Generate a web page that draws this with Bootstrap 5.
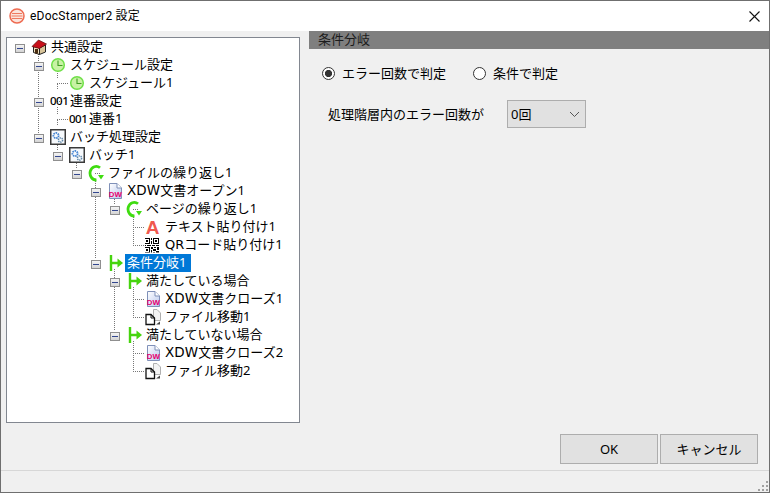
<!DOCTYPE html>
<html lang="ja"><head><meta charset="utf-8"><title>eDocStamper2 設定</title>
<link href="https://cdn.jsdelivr.net/npm/bootstrap@5.3.0/dist/css/bootstrap.min.css" rel="stylesheet">
<style>
html,body{margin:0;height:493px;overflow:hidden;background:#f0f0f0}
body{font-family:"Noto Sans","Noto Sans CJK JP",sans-serif;font-size:13px;line-height:18px;color:#000}
.win{height:493px;border:1px solid #6f6f6f;background:#f0f0f0}
.ttl{height:30px;background:#fff;padding-left:8px;padding-right:9px;font-size:12px;flex:none;font-family:Roboto,"Noto Sans CJK JP",sans-serif}
.ttl-name{margin-left:5px;letter-spacing:.25px}
.mainarea{height:403px;flex:none}
.treebox{width:294px;height:386px;margin-left:5px;margin-top:6px;background:#fff;border:1px solid #828790;flex:none;position:relative;overflow:hidden}
.lines{position:absolute;left:0;top:1px;pointer-events:none}
.tr{height:18px;white-space:nowrap}
.l0{padding-left:8px}.l1{padding-left:27px}.l2{padding-left:46px}.l3{padding-left:65px}.l4{padding-left:84px}.l5{padding-left:103px}.l6{padding-left:122px}
.xp{width:10px;height:9px;border:1px solid #8f8f8f;background:linear-gradient(#f4f4f4,#d4d4d4);margin:2px 6px 0 0;flex:none;position:relative;z-index:1}
.xp::after{content:"";position:absolute;left:1px;right:1px;top:3px;height:1px;background:#33478f}
.nx{width:16px;flex:none}
.ico{width:16px;height:18px;flex:none;margin-right:4px;position:relative;z-index:1}
.num{font-size:11.500px;font-weight:500;width:16px;letter-spacing:-.5px;margin:0 4px 0 0;flex:none;line-height:18px;position:relative;z-index:1}
.txt{margin-top:-2px}
.lat-x{font-family:"DejaVu Sans",sans-serif;font-size:13.500px;letter-spacing:.1px;line-height:16px}
.lat-q{font-family:"DejaVu Sans",sans-serif;font-size:13px;line-height:16px}
.lbl{padding:0 2px;margin-left:-2px;height:18px;line-height:16px;width:66px}
.sel{background:#0078d7;color:#fff}
.pane{flex:1 1 auto;margin-left:9px}
.panehd{height:18px;background:#7f7f7f;color:#1c1c1c;padding-left:9px;line-height:17px}
.radrow{margin-top:15px;margin-left:13px;height:18px}
.radrow .form-check{padding-left:0;margin:0;min-height:18px;display:flex;align-items:center}
.radrow .form-check-input{width:13px;height:13px;margin:0 7px 0 0;float:none;border:1px solid #333;background-color:#fff;background-image:none;box-shadow:none}
.radrow .form-check-input:checked{background-color:#fff;border-color:#333;background-image:radial-gradient(circle,#333 0 3.400px,transparent 3.800px)}
.radrow .form-check-label{opacity:1;line-height:18px}
.rad1{width:151px}
.errrow{margin-top:18px;margin-left:19px;height:28px}
.errlbl{width:179px}
.selbox.form-select{width:79px;height:28px;border-radius:0;border:1px solid #adadad;background-color:#e1e1e1;font-size:13px;line-height:18px;padding:0 0 0 3px;color:#000;box-shadow:none;background-position:right 5px center;background-size:11px 7px;background-image:url("data:image/svg+xml,%3csvg xmlns='http://www.w3.org/2000/svg' viewBox='0 0 11 7'%3e%3cpath fill='none' stroke='%23555' d='M1 1l4.500 4.500L10 1'/%3e%3c/svg%3e")}
.footrow{height:36px;padding-right:11px;flex:none;gap:2px}
.dlgbtn.btn{width:98px;height:30px;padding:0;border-radius:0;border:1px solid #adadad;background:#e1e1e1;color:#000;font-size:13px;line-height:28px}
.stat{height:22px;border-top:1px solid #d7d7d7;flex:none;position:relative}
.grip{position:absolute;right:0;bottom:0}
</style></head><body>
<svg width="0" height="0" class="position-absolute">
<defs>
<linearGradient id="pg" x1="0" y1="0" x2="1" y2="1"><stop offset="0" stop-color="#fff"/><stop offset="1" stop-color="#b9c8ee"/></linearGradient>
<symbol id="i-house" viewBox="0 0 16 18"><path d="M2.500 8.500l6 1.500v6.500l-6-2z" fill="#efe0bc" stroke="#222"/><path d="M8.500 10l6-3v7l-6 2.500z" fill="#d8c49a" stroke="#222"/><path d="M1 8.500L7.500 2l8 4-7 4.500z" fill="#c8101a" stroke="#5a0a0a" stroke-width=".7"/><rect x="4" y="11" width="3" height="4.500" fill="#4a2c10"/></symbol>
<symbol id="i-clock" viewBox="0 0 16 18"><circle cx="8" cy="9" r="6.300" fill="#c8f2a4" stroke="#6fe048" stroke-width="1.500"/><path d="M8 4.500V9.500H12.500" fill="none" stroke="#3f9e22" stroke-width="1.100"/></symbol>
<symbol id="i-gear" viewBox="0 0 16 18"><rect x=".75" y="1.750" width="14.500" height="14.500" fill="#f6f9fc" stroke="#3a3a3a" stroke-width="1.500"/><circle cx="6" cy="7.500" r="2.600" fill="none" stroke="#3d7fd0" stroke-width="1.800" stroke-dasharray="1.500 .8"/><circle cx="10.500" cy="12" r="2.100" fill="none" stroke="#5f86a8" stroke-width="1.500" stroke-dasharray="1.300 .7"/></symbol>
<symbol id="i-loop" viewBox="0 0 16 18"><path d="M12 3.800A6.200 6.800 0 1 0 8.500 16" fill="none" stroke="#3fdc10" stroke-width="2.800"/><path d="M16 11H10L13 15.500z" fill="#3fdc10"/></symbol>
<symbol id="i-doc" viewBox="0 0 16 18"><path d="M2.500 1.500H10L14.500 6V16.500H2.500z" fill="url(#pg)" stroke="#7f90b8"/><path d="M10 1.500V6H14.500" fill="#fff" stroke="#7f90b8"/><text x="1.800" y="15" font-family="Liberation Sans" font-weight="700" font-size="7.800" fill="#e8006e">DW</text></symbol>
<symbol id="i-a" viewBox="0 0 16 18"><text x="7.500" y="15.500" text-anchor="middle" font-family="Liberation Sans" font-weight="700" font-size="19" fill="#f0584e">A</text></symbol>
<symbol id="i-qr" viewBox="0 0 15 15"><path shape-rendering="crispEdges" fill="#000" fill-rule="evenodd" d="M0 0h6v6H0zM1 1v4h4V1zM2 2h2v2H2zM9 0h6v6H9zM10 1v4h4V1zM11 2h2v2h-2zM0 9h6v6H0zM1 10v4h4v-4zM2 11h2v2H2zM7 0h1v2H7zM7 3h1v3H7zM0 7h2v1H0zM3 7h4v1H3zM8 7h3v1H8zM12 7h3v1h-3zM7 9h2v2H7zM10 9h2v1h-2zM13 9h2v3h-2zM9 11h3v2H9zM7 12h1v3H7zM9 14h2v1H9zM12 13h3v2h-3z"/></symbol>
<symbol id="i-branch" viewBox="0 0 16 18"><path d="M4 1v16M5 9h6" stroke="#46d40e" stroke-width="2.400" fill="none"/><path d="M10.500 4.500L16 9 10.500 13.500z" fill="#46d40e"/></symbol>
<symbol id="i-move" viewBox="0 0 16 18"><path d="M8.500 1.500H12L15.500 5V12.500H8.500z" fill="#f4f4f4" stroke="#b0b0b0"/><path d="M1 6.500H6L9.500 10V16.500H1z" fill="#fff" stroke="#111" stroke-width="1.300"/><path d="M6 6.500V10H9.500" fill="none" stroke="#111"/><path d="M11 16.500h4v-3z" fill="#444"/></symbol>
</defs></svg>
<div class="win d-flex flex-column">
  <div class="ttl d-flex align-items-center">
    <svg width="16" height="16" viewBox="0 0 16 16"><circle cx="8" cy="8" r="7" fill="#fbe4dc" stroke="#ee6a50" stroke-width="1.500"/><path d="M3 5.500h10M2.500 8h11M3 10.500h10" stroke="#ee7a60"/></svg>
    <span class="ttl-name">eDocStamper2 設定</span>
    <svg class="ms-auto" width="11" height="11" viewBox="0 0 11 11"><path d="M.5.500l10 10M10.500.500l-10 10" stroke="#111" stroke-width="1.100"/></svg>
  </div>
  <div class="mainarea d-flex">
    <div class="treebox">
      <svg class="lines" width="292" height="384"><path fill="none" stroke="#777" stroke-dasharray="1 1" d="M31 8.500h8M31.500 13V94M50 26.500h6M50 62.500h6M50 98.500h6M50.500 32V40M50.500 68V76M50.500 104V112M50 44.500h11M50 80.500h11M69 116.500h6M88 134.500h6M107 152.500h6M88 224.500h6M107 242.500h6M107 296.500h6M126 170.500h6M69.500 122V130M88.500 140V220M107.500 158V166M107.500 230V292M50.500 50V44.500M50.500 86V80.500M126.500 176V206M126 188.500h11M126 206.500h11M126.500 248V278M126 260.500h11M126 278.500h11M126.500 302V332M126 314.500h11M126 332.500h11"/></svg>
      <div class="tr l0 d-flex align-items-center"><span class="xp"></span><svg class="ico"><use href="#i-house"/></svg><span class="txt">共通設定</span></div>
      <div class="tr l1 d-flex align-items-center"><span class="xp"></span><svg class="ico"><use href="#i-clock"/></svg><span class="txt">スケジュール設定</span></div>
      <div class="tr l2 d-flex align-items-center"><span class="nx"></span><svg class="ico"><use href="#i-clock"/></svg><span class="txt">スケジュール1</span></div>
      <div class="tr l1 d-flex align-items-center"><span class="xp"></span><span class="num">001</span><span class="txt">連番設定</span></div>
      <div class="tr l2 d-flex align-items-center"><span class="nx"></span><span class="num">001</span><span class="txt">連番1</span></div>
      <div class="tr l1 d-flex align-items-center"><span class="xp"></span><svg class="ico"><use href="#i-gear"/></svg><span class="txt">バッチ処理設定</span></div>
      <div class="tr l2 d-flex align-items-center"><span class="xp"></span><svg class="ico"><use href="#i-gear"/></svg><span class="txt">バッチ1</span></div>
      <div class="tr l3 d-flex align-items-center"><span class="xp"></span><svg class="ico"><use href="#i-loop"/></svg><span class="txt">ファイルの繰り返し1</span></div>
      <div class="tr l4 d-flex align-items-center"><span class="xp"></span><svg class="ico"><use href="#i-doc"/></svg><span class="txt"><span class="lat-x">XDW</span>文書オープン1</span></div>
      <div class="tr l5 d-flex align-items-center"><span class="xp"></span><svg class="ico"><use href="#i-loop"/></svg><span class="txt">ページの繰り返し1</span></div>
      <div class="tr l6 d-flex align-items-center"><span class="nx"></span><svg class="ico"><use href="#i-a"/></svg><span class="txt">テキスト貼り付け1</span></div>
      <div class="tr l6 d-flex align-items-center"><span class="nx"></span><svg class="ico" viewBox="1 -1.500 16 18"><use href="#i-qr" width="15" height="15"/></svg><span class="txt"><span class="lat-q">QR</span>コード貼り付け1</span></div>
      <div class="tr l4 d-flex align-items-center"><span class="xp"></span><svg class="ico"><use href="#i-branch"/></svg><span class="lbl sel">条件分岐1</span></div>
      <div class="tr l5 d-flex align-items-center"><span class="xp"></span><svg class="ico"><use href="#i-branch"/></svg><span class="txt">満たしている場合</span></div>
      <div class="tr l6 d-flex align-items-center"><span class="nx"></span><svg class="ico"><use href="#i-doc"/></svg><span class="txt"><span class="lat-x">XDW</span>文書クローズ1</span></div>
      <div class="tr l6 d-flex align-items-center"><span class="nx"></span><svg class="ico"><use href="#i-move"/></svg><span class="txt">ファイル移動1</span></div>
      <div class="tr l5 d-flex align-items-center"><span class="xp"></span><svg class="ico"><use href="#i-branch"/></svg><span class="txt">満たしていない場合</span></div>
      <div class="tr l6 d-flex align-items-center"><span class="nx"></span><svg class="ico"><use href="#i-doc"/></svg><span class="txt"><span class="lat-x">XDW</span>文書クローズ2</span></div>
      <div class="tr l6 d-flex align-items-center"><span class="nx"></span><svg class="ico"><use href="#i-move"/></svg><span class="txt">ファイル移動2</span></div>
    </div>
    <div class="pane">
      <div class="panehd">条件分岐</div>
      <div class="radrow d-flex">
        <div class="form-check rad1"><input class="form-check-input" type="radio" name="m" id="r1" checked><label class="form-check-label" for="r1">エラー回数で判定</label></div>
        <div class="form-check"><input class="form-check-input" type="radio" name="m" id="r2"><label class="form-check-label" for="r2">条件で判定</label></div>
      </div>
      <div class="errrow d-flex align-items-center">
        <span class="errlbl">処理階層内のエラー回数が</span>
        <select class="form-select selbox"><option>0回</option></select>
      </div>
    </div>
  </div>
  <div class="footrow d-flex justify-content-end align-items-start">
    <button type="button" class="btn dlgbtn">OK</button>
    <button type="button" class="btn dlgbtn">キャンセル</button>
  </div>
  <div class="stat">
    <svg class="grip" width="12" height="12" viewBox="0 0 12 12"><path shape-rendering="crispEdges" fill="#a0a0a0" d="M9 1h2v2H9zM5 5h2v2H5zM9 5h2v2H9zM1 9h2v2H1zM5 9h2v2H5zM9 9h2v2H9z"/></svg>
  </div>
</div>
</body></html>
